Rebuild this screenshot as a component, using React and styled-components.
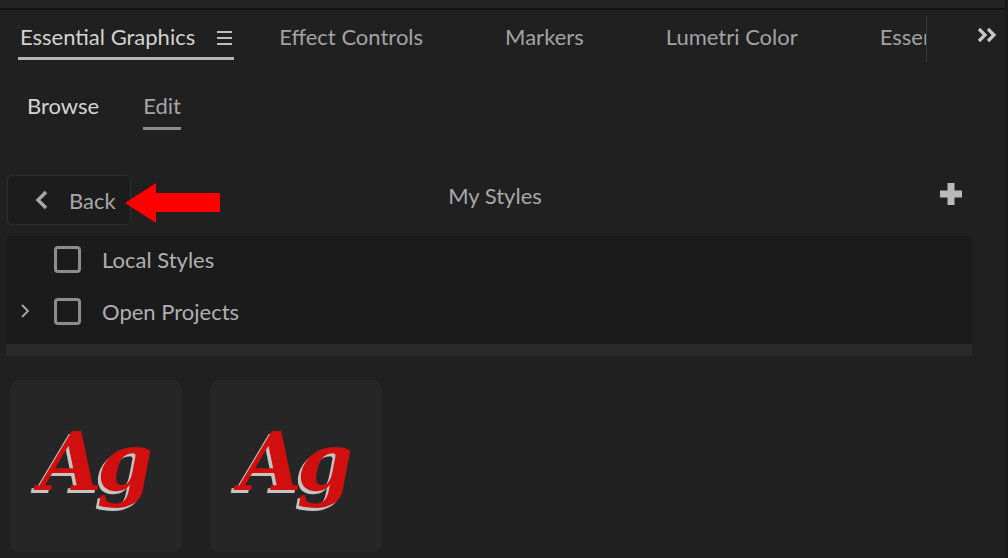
import React from "react";
import styled, { createGlobalStyle } from "styled-components";

const GlobalStyle = createGlobalStyle`
  html, body {
    margin: 0;
    padding: 0;
    background: #202020;
  }
  * {
    box-sizing: border-box;
  }
`;

const Page = styled.div`
  position: relative;
  width: 1008px;
  height: 558px;
  overflow: hidden;
  display: flex;
  flex-direction: column;
  background: #202020;
  font-family: Lato, "Noto Sans", sans-serif;
  font-size: 22px;
  border-right: 3px solid #1a1a1a;
`;

const TopStrip = styled.div`
  height: 10px;
  flex-shrink: 0;
  background: #242424;
  border-bottom: 2px solid #131313;
`;

const TabBar = styled.div`
  display: flex;
  align-items: flex-start;
  height: 52px;
  flex-shrink: 0;
`;

const TabScroller = styled.div`
  display: flex;
  align-items: flex-start;
  width: 909px;
  height: 46px;
  margin: 6px 0 0 18px;
  overflow: hidden;
  border-right: 1px solid #383838;
`;

const Tab = styled.div`
  display: flex;
  align-items: center;
  gap: 22px;
  flex-shrink: 0;
  height: 50px;
  margin-top: -6px;
  padding: ${(p) => (p.$active ? "6px 2px 0" : "6px 41px 0")};
  margin-right: ${(p) => (p.$active ? "4px" : "0")};
  border-bottom: 3px solid ${(p) => (p.$active ? "#b4b4b4" : "transparent")};
  color: ${(p) => (p.$active ? "#d2d2d2" : "#a3a3a3")};
  white-space: nowrap;
`;

const MenuIcon = styled.span`
  display: flex;
  flex-direction: column;
  gap: 4px;
  width: 15px;
  margin-top: 2px;
  & > i {
    display: block;
    height: 2px;
    background: #bdbdbd;
  }
`;

const Overflow = styled.div`
  display: flex;
  margin: 17px 0 0 50px;
`;

const SubTabs = styled.div`
  display: flex;
  gap: 44px;
  height: 70px;
  padding-left: 27px;
  flex-shrink: 0;
`;

const SubTab = styled.div`
  display: flex;
  align-items: center;
  height: 68px;
  padding-top: 21px;
  color: ${(p) => (p.$bright ? "#d4d4d4" : "#a6a6a6")};
  border-bottom: 3px solid ${(p) => (p.$line ? "#8c8c8c" : "transparent")};
`;

const HeaderRow = styled.div`
  display: grid;
  grid-template-columns: 1fr auto 1fr;
  align-items: center;
  width: 1004px;
  height: 50px;
  padding: 0 21px 0 7px;
  margin-top: 43px;
  flex-shrink: 0;
`;

const BackButton = styled.button`
  justify-self: start;
  display: flex;
  align-items: center;
  gap: 20px;
  width: 124px;
  height: 50px;
  padding: 0 0 0 27px;
  background: #1c1c1c;
  border: 1px solid #2e2e2e;
  border-radius: 4px;
  color: #a8a8a8;
  font-family: inherit;
  font-size: 22px;
`;

const Title = styled.div`
  color: #a8a8a8;
  padding-bottom: 10px;
`;

const AddButton = styled.div`
  justify-self: end;
  display: flex;
  margin-right: 21px;
  padding-bottom: 12px;
`;

const ListPanel = styled.div`
  width: 966px;
  margin: 11px 0 0 6px;
  flex-shrink: 0;
  background: #1b1b1b;
  border-radius: 4px 4px 0 0;
  overflow: hidden;
`;

const ListBody = styled.div`
  display: flex;
  flex-direction: column;
  gap: 6px;
  padding-bottom: 10px;
`;

const ListRow = styled.div`
  display: grid;
  grid-template-columns: 48px 27px auto;
  align-items: center;
  height: 46px;
  color: #b0b0b0;
`;

const Expander = styled.span`
  display: flex;
  padding-left: 14px;
`;

const Checkbox = styled.span`
  width: 27px;
  height: 27px;
  border: 3px solid #8d8d8d;
  border-radius: 4px;
`;

const RowLabel = styled.span`
  padding-left: 21px;
`;

const ListFooter = styled.div`
  height: 12px;
  background: #2a2a2a;
`;

const Cards = styled.div`
  display: flex;
  gap: 28px;
  padding-left: 10px;
  margin-top: 24px;
`;

const Card = styled.div`
  width: 172px;
  height: 172px;
  border-radius: 9px;
  background: #262626;
  display: flex;
  align-items: center;
  justify-content: center;
`;

const Sample = styled.span`
  font-family: "DejaVu Serif", "Liberation Serif", serif;
  font-weight: bold;
  font-style: italic;
  font-size: 80px;
  letter-spacing: -5px;
  line-height: 1;
  color: #d10f0f;
  text-shadow: -3px 3px 0 #c4c4c4;
  padding: 0 4px 8px 0;
`;

const Annotation = styled.svg`
  position: absolute;
  left: 125px;
  top: 183px;
`;

const tabs = ["Effect Controls", "Markers", "Lumetri Color", "Essential Sound"];

export default function App() {
  return (
    <>
      <GlobalStyle />
      <Page>
        <TopStrip />
        <TabBar>
          <TabScroller>
            <Tab $active>
              Essential Graphics
              <MenuIcon>
                <i />
                <i />
                <i />
              </MenuIcon>
            </Tab>
            {tabs.map((t) => (
              <Tab key={t}>{t}</Tab>
            ))}
          </TabScroller>
          <Overflow>
            <svg width="22" height="16" viewBox="0 0 22 16">
              <path
                d="M2 2 L8 8 L2 14 M11 2 L17 8 L11 14"
                fill="none"
                stroke="#c8c8c8"
                strokeWidth="3.2"
              />
            </svg>
          </Overflow>
        </TabBar>
        <SubTabs>
          <SubTab $bright>Browse</SubTab>
          <SubTab $line>Edit</SubTab>
        </SubTabs>
        <HeaderRow>
          <BackButton>
            <svg width="14" height="20" viewBox="0 0 14 20">
              <path
                d="M11 2 L3 10 L11 18"
                fill="none"
                stroke="#a8a8a8"
                strokeWidth="3.4"
              />
            </svg>
            Back
          </BackButton>
          <Title>My Styles</Title>
          <AddButton>
            <svg width="22" height="22" viewBox="0 0 22 22">
              <path d="M7.5 0h7v7.5H22v7h-7.5V22h-7v-7.5H0v-7h7.5z" fill="#b9b9b9" />
            </svg>
          </AddButton>
        </HeaderRow>
        <ListPanel>
          <ListBody>
            <ListRow>
              <span />
              <Checkbox />
              <RowLabel>Local Styles</RowLabel>
            </ListRow>
            <ListRow>
              <Expander>
                <svg width="10" height="16" viewBox="0 0 10 16">
                  <path d="M2 2 L8 8 L2 14" fill="none" stroke="#a8a8a8" strokeWidth="1.8" />
                </svg>
              </Expander>
              <Checkbox />
              <RowLabel>Open Projects</RowLabel>
            </ListRow>
          </ListBody>
          <ListFooter />
        </ListPanel>
        <Cards>
          <Card>
            <Sample>Ag</Sample>
          </Card>
          <Card>
            <Sample>Ag</Sample>
          </Card>
        </Cards>
        <Annotation width="95" height="40" viewBox="0 0 95 40">
          <polygon points="0,20 31,0 31,10 95,10 95,29 31,29 31,40" fill="#ff0000" />
        </Annotation>
      </Page>
    </>
  );
}
